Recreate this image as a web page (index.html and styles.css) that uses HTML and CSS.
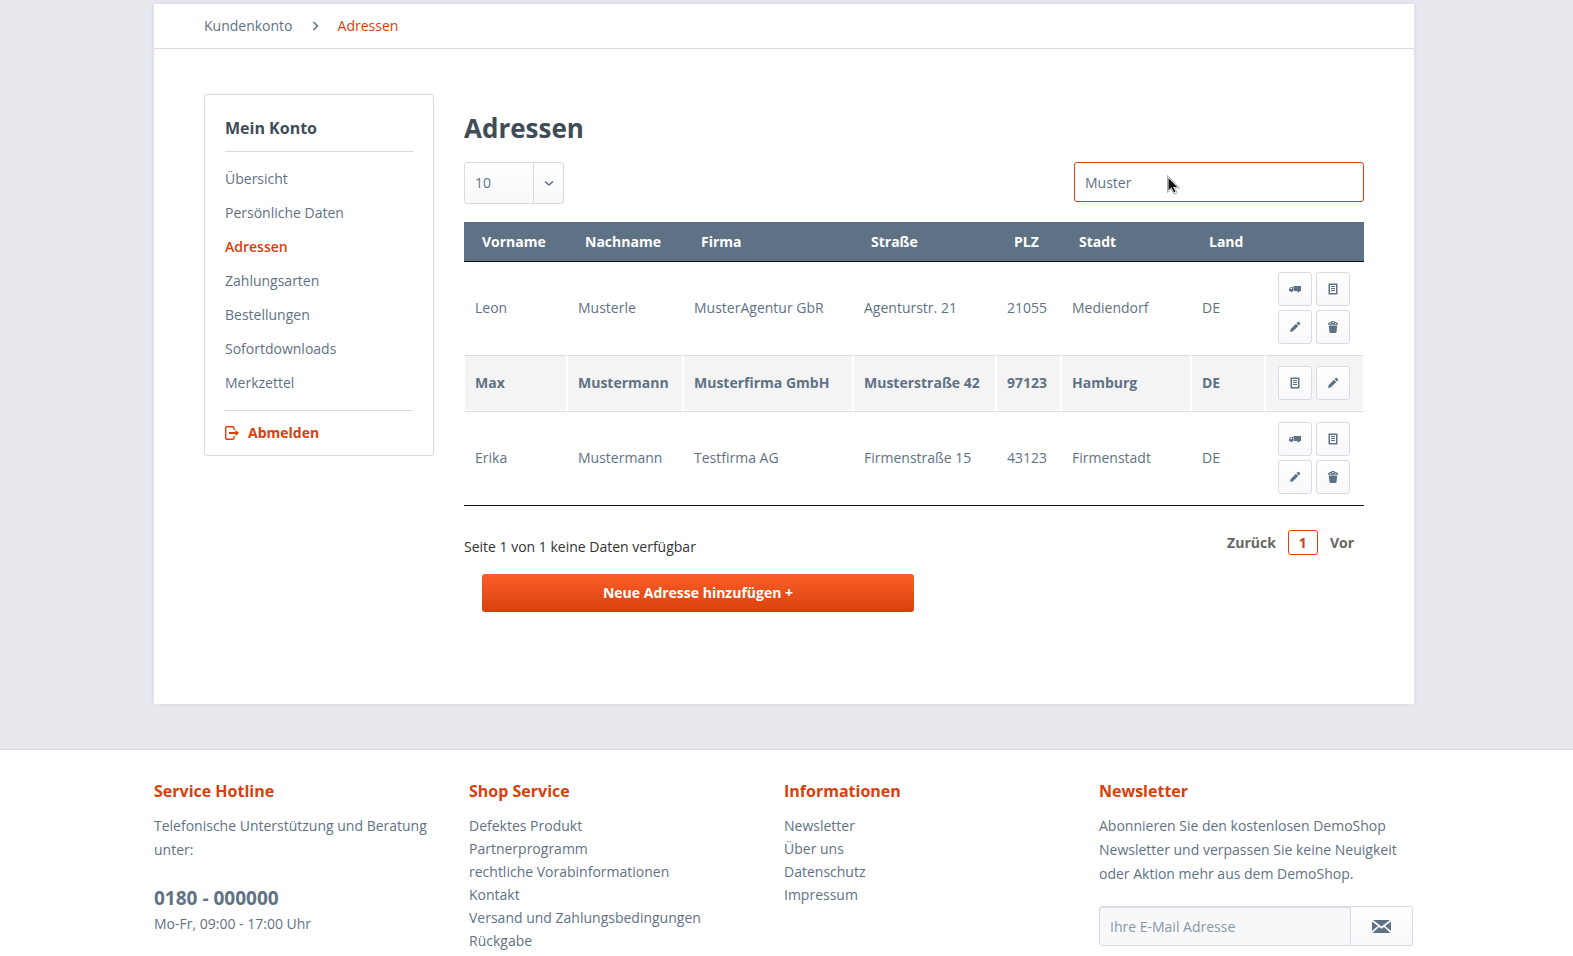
FILE: index.html
```html
<!DOCTYPE html>
<html lang="de">
<head>
<meta charset="utf-8">
<title>Adressen | Kundenkonto</title>
<link rel="stylesheet" href="styles.css">
</head>
<body>
<svg class="sprite" aria-hidden="true">
  <symbol id="i-truck" viewBox="0 0 12 12"><path d="M4.500 3H12v5H4.500z"/><path d="M1.500 4H4v4H0V6z"/><circle cx="2.500" cy="8" r="1.200"/><circle cx="9.500" cy="8" r="1.200"/><path class="cut" d="M1.900 4.800H3V6H1.200z"/></symbol>
  <symbol id="i-doc" viewBox="0 0 12 12"><path fill-rule="evenodd" d="M2 .5h8a.5.5 0 0 1 .5.500v10a.5.5 0 0 1-.5.500H2a.5.5 0 0 1-.5-.500V1A.5.5 0 0 1 2 .5zM3 2v8h6V2z"/><path d="M4 3h4v1H4zM4 5h4v1H4zM4 7h4v1H4z"/></symbol>
  <symbol id="i-pencil" viewBox="0 0 12 12"><path d="M1 11l.7-3L7 2.700 9.300 5 4 10.300zM7.600 2.100l1-1a1 1 0 0 1 1.400 0l.9.900a1 1 0 0 1 0 1.400l-1 1z"/></symbol>
  <symbol id="i-trash" viewBox="0 0 12 12"><path d="M1 3C1.500 1.500 3 1 4 1 4.500-.2 7.500-.2 8 1c1 0 2.500.5 3 2v.7H1zM1.800 4.500h8.400l-.6 6.300c-.1.700-.5 1.200-1.200 1.200H3.600c-.7 0-1.100-.5-1.200-1.200z"/><path class="cut" d="M5 1h2v.8H5zM3 2.200h1v.7H3zM8 2.200h1v.7H8z"/></symbol>
</svg>

<div class="stage">
  <main class="shop">
    <nav class="crumbs" aria-label="Breadcrumb">
      <a href="#">Kundenkonto</a>
      <svg class="crumb-arrow" viewBox="0 0 7 10"><path d="M1.500 1l4 4-4 4"/></svg>
      <a href="#" class="active">Adressen</a>
    </nav>
    <div class="columns">
      <aside class="account">
        <h2>Mein Konto</h2>
        <ul>
          <li><a href="#">Übersicht</a></li>
          <li><a href="#">Persönliche Daten</a></li>
          <li><a href="#" class="active">Adressen</a></li>
          <li><a href="#">Zahlungsarten</a></li>
          <li><a href="#">Bestellungen</a></li>
          <li><a href="#">Sofortdownloads</a></li>
          <li><a href="#">Merkzettel</a></li>
        </ul>
        <a href="#" class="logout"><svg viewBox="0 0 14 14"><path class="line" d="M9 4V1.500L8 .7H1.500L.7 1.500v11l.8.800H8l1-.8V10"/><path d="M4 6h6.500V3.800L14 7l-3.500 3.200V8H4z"/></svg>Abmelden</a>
      </aside>

      <section class="content">
        <h1>Adressen</h1>
        <div class="tools">
          <div class="page-size">
            <select aria-label="Einträge pro Seite"><option>10</option><option>25</option><option>50</option></select>
            <span class="page-size-arrow"><svg viewBox="0 0 10 7"><path d="M1 1.500l4 3.500 4-3.500"/></svg></span>
          </div>
          <div class="search">
            <input type="text" value="Muster" aria-label="Suche">
            <svg class="pointer" viewBox="0 0 13 20"><path class="rim" d="M.5.500v17l4-3.500 2 4.500 2.500.5 1-1.500-2-4.500h4.500z"/><path class="body" d="M1.500 3v12.200l3-2.700L7 17.500l1.500-.7-2.300-4.800h4z"/></svg>
          </div>
        </div>

        <table class="addresses">
          <colgroup><col class="c-first"><col class="c-last"><col class="c-company"><col class="c-street"><col class="c-zip"><col class="c-city"><col class="c-country"><col class="c-actions"></colgroup>
          <thead>
            <tr><th>Vorname</th><th>Nachname</th><th>Firma</th><th>Straße</th><th>PLZ</th><th>Stadt</th><th>Land</th><th></th></tr>
          </thead>
          <tbody>
            <tr>
              <td>Leon</td><td>Musterle</td><td>MusterAgentur GbR</td><td>Agenturstr. 21</td><td>21055</td><td>Mediendorf</td><td>DE</td>
              <td><div class="actions">
                <button type="button" aria-label="Als Lieferadresse"><svg><use href="#i-truck"/></svg></button>
                <button type="button" aria-label="Als Rechnungsadresse"><svg><use href="#i-doc"/></svg></button>
                <button type="button" aria-label="Bearbeiten"><svg><use href="#i-pencil"/></svg></button>
                <button type="button" aria-label="Löschen"><svg><use href="#i-trash"/></svg></button>
              </div></td>
            </tr>
            <tr class="default">
              <td>Max</td><td>Mustermann</td><td>Musterfirma GmbH</td><td>Musterstraße 42</td><td>97123</td><td>Hamburg</td><td>DE</td>
              <td><div class="actions">
                <button type="button" aria-label="Als Rechnungsadresse"><svg><use href="#i-doc"/></svg></button>
                <button type="button" aria-label="Bearbeiten"><svg><use href="#i-pencil"/></svg></button>
              </div></td>
            </tr>
            <tr>
              <td>Erika</td><td>Mustermann</td><td>Testfirma AG</td><td>Firmenstraße 15</td><td>43123</td><td>Firmenstadt</td><td>DE</td>
              <td><div class="actions">
                <button type="button" aria-label="Als Lieferadresse"><svg><use href="#i-truck"/></svg></button>
                <button type="button" aria-label="Als Rechnungsadresse"><svg><use href="#i-doc"/></svg></button>
                <button type="button" aria-label="Bearbeiten"><svg><use href="#i-pencil"/></svg></button>
                <button type="button" aria-label="Löschen"><svg><use href="#i-trash"/></svg></button>
              </div></td>
            </tr>
          </tbody>
        </table>

        <div class="table-foot">
          <p>Seite 1 von 1 keine Daten verfügbar</p>
          <nav class="pager" aria-label="Seiten"><a href="#">Zurück</a><a href="#" class="current">1</a><a href="#">Vor</a></nav>
        </div>
        <button type="button" class="add">Neue Adresse hinzufügen +</button>
      </section>
    </div>
  </main>
</div>

<footer class="footer">
  <div class="footer-grid">
    <section>
      <h3>Service Hotline</h3>
      <p>Telefonische Unterstützung und Beratung unter:</p>
      <a href="#" class="phone">0180 - 000000</a>
      <p>Mo-Fr, 09:00 - 17:00 Uhr</p>
    </section>
    <section>
      <h3>Shop Service</h3>
      <ul>
        <li><a href="#">Defektes Produkt</a></li>
        <li><a href="#">Partnerprogramm</a></li>
        <li><a href="#">rechtliche Vorabinformationen</a></li>
        <li><a href="#">Kontakt</a></li>
        <li><a href="#">Versand und Zahlungsbedingungen</a></li>
        <li><a href="#">Rückgabe</a></li>
      </ul>
    </section>
    <section>
      <h3>Informationen</h3>
      <ul>
        <li><a href="#">Newsletter</a></li>
        <li><a href="#">Über uns</a></li>
        <li><a href="#">Datenschutz</a></li>
        <li><a href="#">Impressum</a></li>
      </ul>
    </section>
    <section>
      <h3>Newsletter</h3>
      <p>Abonnieren Sie den kostenlosen DemoShop Newsletter und verpassen Sie keine Neuigkeit oder Aktion mehr aus dem DemoShop.</p>
      <form class="newsletter">
        <input type="email" placeholder="Ihre E-Mail Adresse" aria-label="Ihre E-Mail Adresse">
        <button type="button" aria-label="Newsletter abonnieren"><svg viewBox="0 0 19 13"><path d="M1 0h17L9.500 6.500zM0 1.500L6 6 0 11zM19 1.500L13 6l6 5zM7 7l2.500 1.800L12 7l6.500 6H.5z"/></svg></button>
      </form>
    </section>
  </div>
</footer>
</body>
</html>
```
FILE: styles.css
```css
:root {
  --text: #5f7285;
  --accent: #d9400b;
  --line: #dadae5;
  --dark: #3f4c58;
  --fade: linear-gradient(#fff, #f8f8fa);
}

* { box-sizing: border-box; }

body {
  margin: 0;
  background: #fff;
  color: var(--text);
  font: 14px/24px "Open Sans", "Noto Sans", sans-serif;
}

h1, h2, h3, p, ul { margin: 0; padding: 0; }
ul { list-style: none; }
a { color: inherit; text-decoration: none; }
button, input, select { font: inherit; color: inherit; margin: 0; }
svg { display: block; fill: currentColor; }
.sprite { position: absolute; width: 0; height: 0; }

.stage {
  padding: 4px 5px 45px 0;
  background: #e8e9ee;
}

.shop {
  max-width: 1260px;
  margin: 0 auto;
  padding-bottom: 92px;
  background: #fff;
  box-shadow: 0 0 4px 1px var(--line);
}

.crumbs {
  display: flex;
  align-items: center;
  gap: 19px;
  height: 45px;
  padding: 0 50px;
  border-bottom: 1px solid var(--line);
}
.crumb-arrow { width: 7px; height: 10px; fill: none; stroke: var(--text); stroke-width: 1.6; }
.active { color: var(--accent); }

.columns {
  display: flex;
  align-items: flex-start;
  gap: 30px;
  padding: 45px 50px 0;
}

.account {
  flex: 0 0 230px;
  padding: 0 20px;
  border: 1px solid var(--line);
  border-radius: 3px;
}
.account h2 {
  padding: 21px 0 11px;
  border-bottom: 1px solid var(--line);
  color: var(--dark);
  font-size: 16px;
  line-height: 24px;
}
.account ul { padding: 10px 0; border-bottom: 1px solid var(--line); }
.account li a { display: block; line-height: 34px; }
.account .active { font-weight: 600; }
.logout {
  display: flex;
  align-items: center;
  gap: 9px;
  height: 44px;
  color: var(--accent);
  font-weight: 700;
}
.logout svg { width: 14px; height: 14px; }
.logout .line { fill: none; stroke: currentColor; stroke-width: 1.4; }

.content { flex: 1; min-width: 0; padding-top: 16px; }
.content h1 { color: var(--dark); font-size: 26px; line-height: 36px; }

.tools {
  display: flex;
  justify-content: space-between;
  align-items: flex-start;
  margin: 16px 0 18px;
}
.page-size { position: relative; width: 100px; }
.page-size select {
  display: block;
  width: 100%;
  height: 42px;
  padding: 0 10px;
  border: 1px solid var(--line);
  border-radius: 3px;
  background: var(--fade);
  appearance: none;
}
.page-size-arrow {
  position: absolute;
  top: 1px;
  right: 1px;
  bottom: 1px;
  width: 30px;
  display: grid;
  place-items: center;
  border-left: 1px solid var(--line);
  pointer-events: none;
}
.page-size-arrow svg { width: 10px; height: 7px; fill: none; stroke: var(--text); stroke-width: 1.6; }

.search { position: relative; width: 290px; }
.search input {
  display: block;
  width: 100%;
  height: 40px;
  padding: 0 10px;
  border: 1px solid var(--accent);
  border-radius: 3px;
  background: #fff;
  outline: 0;
}
.pointer {
  position: absolute;
  left: 93px;
  top: 13px;
  width: 13px;
  height: 20px;
}
.pointer .rim { fill: #fff; stroke: #aaa; stroke-width: 1; }
.pointer .body { fill: #111; }

.addresses {
  width: 100%;
  table-layout: fixed;
  border-collapse: separate;
  border-spacing: 0;
  border-bottom: 1px solid #111;
}
.c-first { width: 103px; }
.c-last { width: 116px; }
.c-company { width: 170px; }
.c-street { width: 143px; }
.c-zip { width: 65px; }
.c-city { width: 130px; }
.c-country { width: 74px; }
.c-actions { width: 99px; }
.addresses th {
  height: 40px;
  padding: 0 0 0 18px;
  border-bottom: 1px solid #111;
  background: var(--text);
  color: #fff;
  text-align: left;
}
.addresses td {
  padding: 10px 0 10px 10px;
  border: 1px solid #fff;
  border-top-color: #ddd;
  white-space: nowrap;
}
.addresses tbody tr:first-child td { border-top: 0; }
.addresses td:last-child { padding-left: 12px; }
.default td { background: #f4f4f4; font-weight: 700; }

.actions { display: grid; grid-template-columns: 34px 34px; gap: 4px; }
.actions button {
  display: grid;
  place-items: center;
  height: 34px;
  padding: 0;
  border: 1px solid var(--line);
  border-radius: 3px;
  background: var(--fade);
}
.actions svg { width: 12px; height: 12px; }
.cut { fill: #fff; }

.table-foot {
  display: flex;
  justify-content: space-between;
  align-items: flex-start;
  margin: 24px 0 15px;
}
.table-foot p { padding-top: 5px; color: #333; }
.pager { display: flex; align-items: center; gap: 2px; color: #666; font-weight: 700; }
.pager a { padding: 0 10px; line-height: 23px; }
.pager .current {
  border: 1px solid var(--accent);
  border-radius: 3px;
  color: var(--accent);
}

.add {
  display: block;
  width: 48%;
  height: 38px;
  margin-left: 2%;
  border: 0;
  border-radius: 3px;
  background: linear-gradient(#fb5f2a, var(--accent));
  color: #fff;
  font-weight: 700;
}

.footer { padding: 29px 5px 0 0; border-top: 1px solid var(--line); }
.footer-grid {
  display: grid;
  grid-template-columns: repeat(4, 1fr);
  max-width: 1260px;
  margin: 0 auto;
}
.footer h3 { margin-bottom: 11px; color: var(--accent); font-size: 16px; line-height: 24px; }
.footer li { line-height: 23px; }
.footer section p { padding-right: 10px; }
.phone { display: block; margin-top: 22px; font-size: 19px; font-weight: 700; line-height: 28px; }

.newsletter { display: flex; margin: 20px 1px 0 0; }
.newsletter input {
  flex: 1;
  min-width: 0;
  height: 40px;
  padding: 0 10px;
  border: 1px solid var(--line);
  border-radius: 3px 0 0 3px;
  background: #f8f8fa;
  box-shadow: inset 0 1px 1px var(--line);
}
.newsletter input::placeholder { color: #8798a9; opacity: 1; }
.newsletter button {
  display: grid;
  place-items: center;
  width: 62px;
  border: 1px solid var(--line);
  border-left: 0;
  border-radius: 0 3px 3px 0;
  background: var(--fade);
}
.newsletter svg { width: 19px; height: 13px; }
```
